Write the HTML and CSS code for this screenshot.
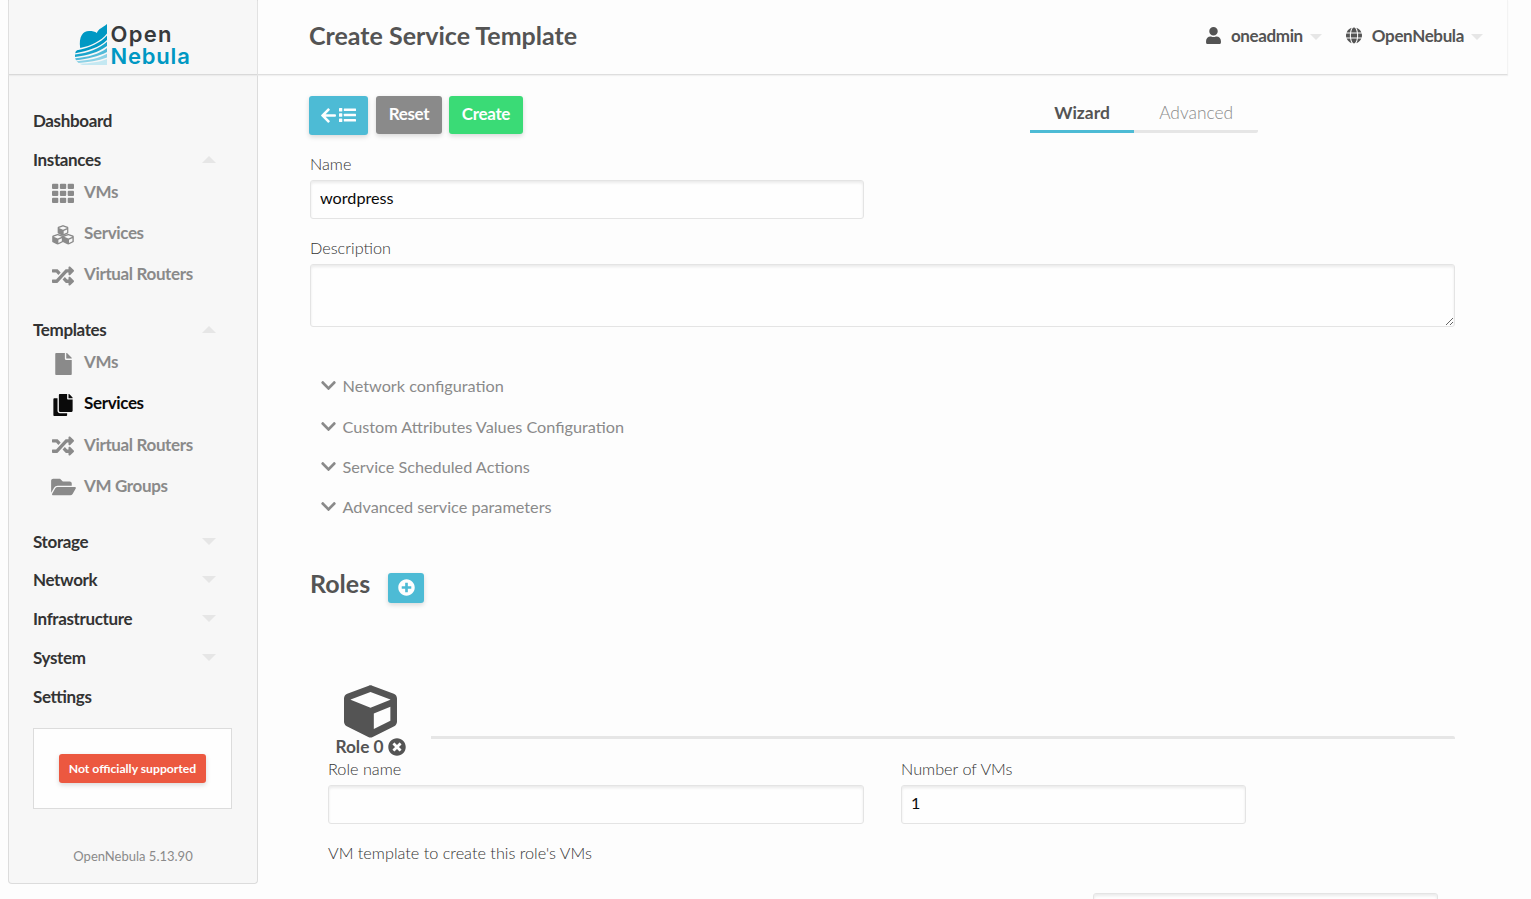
FILE: index.html
```html
<!DOCTYPE html>
<html lang="en">
<head>
<meta charset="utf-8">
<title>OpenNebula Sunstone</title>
<link rel="stylesheet" href="styles.css">
</head>
<body>
<svg class="sprite" aria-hidden="true">
  <symbol id="i-random" viewBox="0 0 512 512"><path d="M504.971 359.029c9.373 9.373 9.373 24.569 0 33.941l-80 79.984c-15.01 15.01-40.971 4.49-40.971-16.971V416h-58.785a12.004 12.004 0 0 1-8.773-3.812l-70.556-75.596 53.333-57.143L352 336h32v-39.981c0-21.438 25.943-31.998 40.971-16.971l80 79.981zM12 176h84l52.781 56.551 53.333-57.143-70.556-75.596A11.999 11.999 0 0 0 122.785 96H12c-6.627 0-12 5.373-12 12v56c0 6.627 5.373 12 12 12zm372 0v39.984c0 21.46 25.961 31.98 40.971 16.971l80-79.984c9.373-9.373 9.373-24.569 0-33.941l-80-79.981C409.943 24.021 384 34.582 384 56.019V96h-58.785a12.004 12.004 0 0 0-8.773 3.812L96 336H12c-6.627 0-12 5.373-12 12v56c0 6.627 5.373 12 12 12h110.785c3.326 0 6.503-1.381 8.773-3.812L352 176h32z"/></symbol>
  <symbol id="i-cube" viewBox="0 0 512 512"><path d="M239.1 6.3l-208 78c-18.7 7-31.1 25-31.1 45v225.1c0 18.2 10.3 34.8 26.5 42.9l208 104c13.5 6.8 29.4 6.8 42.9 0l208-104c16.3-8.1 26.5-24.8 26.5-42.9V129.3c0-20-12.4-37.9-31.1-44.9l-208-78C262 2.2 250 2.2 239.1 6.3zM256 68.4l192 72v1.1l-192 78-192-78v-1.1l192-72zm32 356V275.5l160-65v133.9l-160 80z"/></symbol>
  <symbol id="i-chevron" viewBox="0 0 448 512"><path d="M207.029 381.476L12.686 187.132c-9.373-9.373-9.373-24.569 0-33.941l22.667-22.667c9.357-9.357 24.522-9.375 33.901-.04L224 284.505l154.745-154.021c9.379-9.335 24.544-9.317 33.901.04l22.667 22.667c9.373 9.373 9.373 24.569 0 33.941L240.971 381.476c-9.373 9.372-24.569 9.372-33.942 0z"/></symbol>
</svg>

<div class="page">
  <aside class="sidebar">
    <div class="brand">
      <svg class="mark" width="34" height="44" viewBox="0 0 34 44">
        <path fill="#0098c3" d="M6.200 26C4.500 14.500 9 9 15 9C18.500 9 21 9.600 22.800 11C24.500 6.500 29 5.500 33 2V11.500C27 19 17 24 6.200 26Z"/>
        <path fill="#0098c3" d="M3 28.200C16 26 26 21 33 13.500V18C25 25.500 14 29 1.300 31.200C1.300 30 2 29 3 28.200Z"/>
        <path fill="#1ba5cc" d="M1 32.600C14 31 25 27 33 19.800V24C24 30.500 14 33.300 1 35Z"/>
        <path fill="#53bbd9" d="M1.100 36.300C14 35 25 32 33 25.900V30C24 34.800 14 36.800 2 38.200Z"/>
        <path fill="#8dd2e6" d="M2.600 39.200C14 38.300 25 36.300 33 31.700V35.500C24 39 14 40.300 4.600 40.900Z"/>
        <path fill="#c4e8f2" d="M5.600 41.700C16 41.400 26 40 33 37V43H11C8.500 43 6.600 42.600 5.600 41.700Z"/>
      </svg>
      <div class="wordmark"><span class="w1">Open</span><span class="w2">Nebula</span></div>
    </div>
    <nav class="menu">
      <a class="top">Dashboard</a>
      <a class="top">Instances<i class="caret up"></i></a>
      <div class="subs">
        <a class="sub"><span class="ico"><svg width="22" height="20" viewBox="0 -.8 22 20"><rect width="6.300" height="5.300" rx="1"/><rect x="7.900" width="6.300" height="5.300" rx="1"/><rect x="15.700" width="6.300" height="5.300" rx="1"/><rect y="7" width="6.300" height="5.300" rx="1"/><rect x="7.900" y="7" width="6.300" height="5.300" rx="1"/><rect x="15.700" y="7" width="6.300" height="5.300" rx="1"/><rect y="13.900" width="6.300" height="5.300" rx="1"/><rect x="7.900" y="13.900" width="6.300" height="5.300" rx="1"/><rect x="15.700" y="13.900" width="6.300" height="5.300" rx="1"/></svg></span>VMs</a>
        <a class="sub"><span class="ico low"><svg width="22" height="20" viewBox="0 0 22 20"><use href="#i-cube" x="5.300" y="0" width="11.400" height="11"/><use href="#i-cube" x="0" y="8.800" width="11.400" height="11"/><use href="#i-cube" x="10.600" y="8.800" width="11.400" height="11"/></svg></span>Services</a>
        <a class="sub"><span class="ico"><svg width="22" height="22"><use href="#i-random"/></svg></span>Virtual Routers</a>
      </div>
      <a class="top">Templates<i class="caret up"></i></a>
      <div class="subs">
        <a class="sub"><span class="ico"><svg width="17" height="22" viewBox="0 0 384 512"><path d="M224 136V0H24C10.700 0 0 10.700 0 24v464c0 13.300 10.700 24 24 24h336c13.300 0 24-10.700 24-24V160H248c-13.200 0-24-10.800-24-24zm160-14.100v6.100H256V0h6.100c6.400 0 12.500 2.500 17 7l97.900 98c4.500 4.500 7 10.600 7 16.900z"/></svg></span>VMs</a>
        <a class="sub active"><span class="ico"><svg width="20" height="22" viewBox="0 0 448 512"><path d="M320 448v40c0 13.255-10.745 24-24 24H24c-13.255 0-24-10.745-24-24V120c0-13.255 10.745-24 24-24h72v296c0 30.879 25.121 56 56 56h168zm0-344V0H152c-13.255 0-24 10.745-24 24v368c0 13.255 10.745 24 24 24h272c13.255 0 24-10.745 24-24V128H344c-13.200 0-24-10.800-24-24zm120.971-31.029L375.029 7.029A24 24 0 0 0 358.059 0H352v96h96v-6.059a24 24 0 0 0-7.029-16.970z"/></svg></span>Services</a>
        <a class="sub"><span class="ico"><svg width="22" height="22"><use href="#i-random"/></svg></span>Virtual Routers</a>
        <a class="sub"><span class="ico"><svg width="25" height="22" viewBox="0 0 576 512"><path d="M572.694 292.093L500.270 416.248A63.997 63.997 0 0 1 444.989 448H45.025c-18.523 0-30.064-20.093-20.731-36.093l72.424-124.155A64 64 0 0 1 152 256h399.964c18.523 0 30.064 20.093 20.730 36.093zM152 224h328v-48c0-26.510-21.490-48-48-48H272l-64-64H48C21.490 64 0 85.490 0 112v278.046l69.077-118.418C86.214 242.250 117.989 224 152 224z"/></svg></span>VM Groups</a>
      </div>
      <a class="top">Storage<i class="caret"></i></a>
      <a class="top">Network<i class="caret"></i></a>
      <a class="top">Infrastructure<i class="caret"></i></a>
      <a class="top">System<i class="caret"></i></a>
      <a class="top">Settings</a>
    </nav>
    <div class="support"><span class="badge">Not officially supported</span></div>
    <div class="version">OpenNebula 5.13.90</div>
  </aside>

  <div class="content">
    <header class="topbar">
      <h1>Create Service Template</h1>
      <div class="account">
        <svg width="15" height="17" viewBox="0 0 448 512"><path d="M224 256c70.700 0 128-57.300 128-128S294.700 0 224 0 96 57.300 96 128s57.300 128 128 128zm89.600 32h-16.700c-22.200 10.200-46.900 16-72.900 16s-50.600-5.800-72.900-16h-16.700C60.200 288 0 348.200 0 422.400V464c0 26.500 21.500 48 48 48h352c26.500 0 48-21.500 48-48v-41.600c0-74.200-60.200-134.400-134.400-134.400z"/></svg>
        <span class="who">oneadmin</span><i class="caret"></i>
        <svg class="globe" width="16" height="17" viewBox="0 0 496 512"><path d="M336.500 160C322 70.700 287.800 8 248 8s-74 62.700-88.500 152h177zM152 256c0 22.200 1.200 43.500 3.300 64h185.300c2.100-20.500 3.300-41.800 3.300-64s-1.200-43.500-3.300-64H155.300c-2.100 20.500-3.300 41.800-3.300 64zm324.700-96c-28.600-67.900-86.500-120.400-158-141.600 24.400 33.800 41.200 84.700 50 141.600h108zM177.200 18.400C105.800 39.600 47.800 92.100 19.300 160h108c8.700-56.900 25.500-107.800 49.900-141.600zM487.400 192H372.700c2.100 21 3.300 42.500 3.300 64s-1.200 43-3.300 64h114.600c5.500-20.500 8.600-41.800 8.600-64s-3.100-43.500-8.500-64zM120 256c0-21.500 1.200-43 3.300-64H8.600C3.200 212.500 0 233.800 0 256s3.200 43.500 8.600 64h114.600c-2-21-3.200-42.500-3.200-64zm39.500 96c14.500 89.300 48.700 152 88.500 152s74-62.700 88.500-152h-177zm159.300 141.600c71.400-21.200 129.400-73.700 158-141.600h-108c-8.800 56.900-25.600 107.800-50 141.600zM19.300 352c28.600 67.900 86.500 120.400 158 141.600-24.400-33.800-41.200-84.700-50-141.600h-108z"/></svg>
        <span class="who">OpenNebula</span><i class="caret"></i>
      </div>
    </header>

    <main class="form">
      <div class="actions">
        <button class="btn back" aria-label="Back to list">
          <svg width="15" height="17" viewBox="0 0 448 512"><path d="M257.500 445.100l-22.200 22.200c-9.400 9.400-24.600 9.400-33.900 0L7 273c-9.400-9.400-9.400-24.600 0-33.900L201.400 44.700c9.400-9.400 24.600-9.400 33.900 0l22.200 22.200c9.500 9.500 9.300 25-.4 34.300L136.600 216H424c13.300 0 24 10.700 24 24v32c0 13.300-10.700 24-24 24H136.600l120.500 114.800c9.800 9.300 10 24.800.4 34.300z"/></svg>
          <svg width="17" height="14" viewBox="0 0 17 14"><rect width="3.300" height="3.600" rx=".6"/><rect y="5.200" width="3.300" height="3.600" rx=".6"/><rect y="10.400" width="3.300" height="3.600" rx=".6"/><rect x="4.800" y=".5" width="12.200" height="2.600" rx=".5"/><rect x="4.800" y="5.700" width="12.200" height="2.600" rx=".5"/><rect x="4.800" y="10.900" width="12.200" height="2.600" rx=".5"/></svg>
        </button>
        <button class="btn reset">Reset</button>
        <button class="btn create">Create</button>
        <div class="tabs"><a class="tab on">Wizard</a><a class="tab">Advanced</a></div>
      </div>

      <label class="field name">Name<input type="text" value="wordpress"></label>
      <label class="field desc">Description<textarea></textarea></label>

      <div class="folds">
        <a class="fold"><svg width="15" height="17"><use href="#i-chevron"/></svg>Network configuration</a>
        <a class="fold"><svg width="15" height="17"><use href="#i-chevron"/></svg>Custom Attributes Values Configuration</a>
        <a class="fold"><svg width="15" height="17"><use href="#i-chevron"/></svg>Service Scheduled Actions</a>
        <a class="fold"><svg width="15" height="17"><use href="#i-chevron"/></svg>Advanced service parameters</a>
      </div>

      <div class="roles-head">
        <h2>Roles</h2>
        <button class="add" aria-label="Add role"><svg width="17" height="17" viewBox="0 0 512 512"><path d="M256 8C119 8 8 119 8 256s111 248 248 248 248-111 248-248S393 8 256 8zm144 276c0 6.600-5.400 12-12 12h-92v92c0 6.600-5.400 12-12 12h-56c-6.600 0-12-5.400-12-12v-92h-92c-6.600 0-12-5.400-12-12v-56c0-6.600 5.400-12 12-12h92v-92c0-6.600 5.400-12 12-12h56c6.600 0 12 5.400 12 12v92h92c6.600 0 12 5.400 12 12v56z"/></svg></button>
      </div>

      <div class="role-tabs">
        <div class="role-tab">
          <svg width="53" height="53"><use href="#i-cube"/></svg>
          <div class="role-title">Role 0<svg width="18" height="18" viewBox="0 0 512 512"><path d="M256 8C119 8 8 119 8 256s111 248 248 248 248-111 248-248S393 8 256 8zm121.600 313.100c4.700 4.700 4.700 12.300 0 17L338 377.600c-4.700 4.700-12.300 4.700-17 0L256 312l-65.100 65.600c-4.700 4.700-12.300 4.700-17 0L134.400 338c-4.700-4.700-4.700-12.300 0-17l65.600-65-65.600-65.100c-4.700-4.700-4.700-12.300 0-17l39.600-39.600c4.700-4.700 12.300-4.700 17 0l65 65.700 65.100-65.600c4.700-4.700 12.300-4.700 17 0l39.600 39.600c4.700 4.700 4.700 12.300 0 17L312 256l65.600 65.100z"/></svg></div>
        </div>
        <div class="rule"></div>
      </div>

      <div class="role-fields">
        <label class="field role-name">Role name<input type="text"></label>
        <label class="field count">Number of VMs<input type="text" value="1"></label>
      </div>
      <div class="template-label">VM template to create this role's VMs</div>
      <div class="search"><input type="text" aria-label="Search"></div>
    </main>
  </div>
</div>
</body>
</html>
```
FILE: styles.css
```css
* { box-sizing: border-box; }
html, body { height: 100%; }
body {
  margin: 0;
  overflow: hidden;
  background: #fdfdfd;
  color: #545454;
  font-family: Lato, "Open Sans", sans-serif;
  font-size: 16.25px;
  font-feature-settings: "liga";
}
svg { display: block; fill: currentColor; flex: none; }
.sprite { position: absolute; width: 0; height: 0; }
.page { display: flex; align-items: flex-start; width: 1508px; height: 899px; padding-left: 8px; }

.sidebar {
  flex: none;
  width: 250px;
  height: 884px;
  border: 1px solid #dcdcdc;
  border-top: 0;
  border-radius: 0 0 4px 4px;
  background: #f7f7f7;
}
.brand { display: flex; gap: 2.500px; height: 75px; padding: 22px 0 0 65px; border-bottom: 1px solid #d9d9d9; box-shadow: 0 1px 1px #ececec; }
.wordmark { display: flex; flex-direction: column; padding-top: .5px; font: 600 22px/22.5px Inter, Lato, sans-serif; }
.w1 { color: #373a3c; letter-spacing: 1.300px; }
.w2 { color: #0098c3; letter-spacing: .8px; }
.menu { padding: 35.300px 0 2.800px 24px; }
.top, .sub { display: flex; align-items: center; height: 20px; font-size: 17px; font-weight: 700; letter-spacing: -.36px; }
.top { color: #333; margin-bottom: 18.800px; padding-right: 41.500px; justify-content: space-between; }
.top:has(+ .subs) { margin-bottom: 12.100px; }
.subs { display: flex; flex-direction: column; gap: 21.300px; margin-bottom: 35.700px; }
.sub { color: #8a8a8a; }
.sub.active { color: #0a0a0a; }
.ico { display: flex; justify-content: center; width: 24px; margin: 4px 9px 0 18px; }
.ico.low { margin-top: 5px; }
.caret { width: 0; height: 0; border: 7px solid transparent; border-top-color: #e6e6e6; border-bottom: 0; }
.caret.up { border-top: 0; border-bottom: 7px solid #e6e6e6; }
.support {
  display: flex; align-items: center; justify-content: center;
  width: 199px; height: 81px; margin-left: 24px;
  border: 1px solid #dcdcdc; background: #fefefe;
}
.badge {
  width: 147px; height: 29px; line-height: 29px; border-radius: 3px;
  background: #ec5840; color: #fefefe; font-size: 12.200px; font-weight: 700; text-align: center;
  box-shadow: 0 2px 5px rgba(0, 0, 0, .15);
}
.version { margin-top: 38px; line-height: 18px; color: #8a8a8a; font-size: 13px; text-align: center; }

.content { flex: 1; min-width: 0; }
.topbar {
  display: flex; justify-content: space-between; height: 75px; padding: 0 24px 0 51px;
  border-bottom: 1px solid #dedede; border-right: 1px solid #f3f3f3; box-shadow: 0 1px 1px #f1f1f1;
}
h1, h2 { margin: 0; font-size: 25px; font-weight: 700; line-height: 30px; }
h1 { padding-top: 20px; }
h2 { margin-top: -1px; }
.account { display: flex; align-items: center; height: 71px; font-size: 17px; font-weight: 700; letter-spacing: -.36px; }
.account .caret { border-width: 6px 6px 0; margin-top: 3px; }
.who { margin: 0 7px 0 10px; }
.globe { margin-left: 24px; }

.form { padding: 21px 53px 0 52px; }
.actions { display: flex; align-items: flex-start; height: 59px; margin-left: -1px; }
.btn {
  display: flex; align-items: center; justify-content: center; height: 38px; padding: 0 0 3px;
  border: 0; border-radius: 3px; color: #fefefe; font: 700 17px Lato, sans-serif; letter-spacing: -.33px;
  box-shadow: 0 2px 5px rgba(0, 0, 0, .15);
}
.back { width: 59px; height: 39px; gap: 3px; padding: 0 0 1px; background: #4dbbd5; }
.reset { width: 66px; margin-left: 8px; background: #8a8a8a; }
.create { width: 74px; margin-left: 7px; background: #3adb76; }
.tabs { display: flex; margin-left: 506px; padding-left: 1px; height: 37px; border-radius: 3px; }
.tab { width: 124.300px; padding-top: 6px; line-height: 22px; border-bottom: 3px solid #e6e6e6; border-radius: 0 0 2px 0; color: #8a8a8a; font-size: 17.400px; font-weight: 300; text-align: center; }
.tab.on { width: 104px; border-bottom-color: #4dbbd5; border-radius: 0; color: #545454; font-weight: 700; }

.field { display: block; line-height: 24px; font-weight: 300; color: #333; }
input, textarea {
  display: block; width: 100%; height: 39px; padding: 0 9px 3px;
  border: 1px solid #e4e4e4; border-radius: 3px; background: #fefefe; color: #0a0a0a;
  font: 400 16.200px Lato, sans-serif; box-shadow: inset 0 2px 3px rgba(10, 10, 10, .08);
}
textarea { height: 63px; resize: both; }
.name { width: 554px; margin-top: -3px; }
.name input { margin-top: 4px; padding-bottom: 5px; }
.desc { margin-top: 17px; }
.desc textarea { margin-top: 4px; }
.folds { display: flex; flex-direction: column; gap: 16.200px; margin: 46.400px 0 0 11px; }
.fold { display: flex; align-items: center; gap: 6.500px; height: 24px; color: #8a8a8a; }
.fold:first-child { margin-bottom: .5px; }
.roles-head { display: flex; height: 54px; margin-top: 50.400px; }
.add {
  display: flex; align-items: center; justify-content: center; width: 36px; height: 30px; margin: 4px 0 0 18px; padding: 0;
  border: 0; border-radius: 3px; background: #4dbbd5; color: #fefefe; box-shadow: 0 2px 5px rgba(0, 0, 0, .15);
}
.role-tabs { display: flex; margin-top: 61px; height: 73px; }
.role-tab { display: flex; flex-direction: column; align-items: center; width: 121px; padding-top: 1px; }
.role-title { display: flex; align-items: center; gap: 4px; height: 18px; font-size: 17.300px; font-weight: 700; }
.rule { flex: 1; height: 3px; margin-top: 52px; background: #e6e6e6; border-radius: 0 2px 0 0; }
.role-fields { display: flex; gap: 37px; margin: 0 0 0 18px; }
.role-name { width: 536px; }
.count { width: 345px; }
.role-fields input { margin-top: 4px; }
.template-label { margin: 17px 0 0 18px; line-height: 24px; font-weight: 300; color: #333; }
.search { width: 345px; margin: 28px 0 0 783px; }
```
